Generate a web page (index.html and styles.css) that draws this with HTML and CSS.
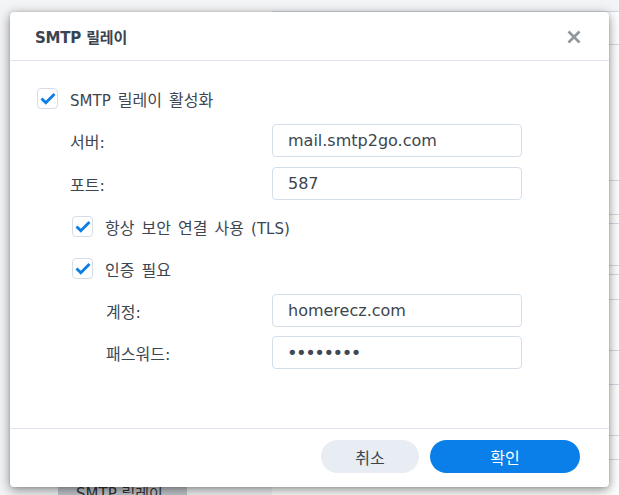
FILE: index.html
```html
<!DOCTYPE html>
<html lang="ko">
<head>
<meta charset="utf-8">
<title>SMTP 릴레이</title>
<link rel="stylesheet" href="styles.css">
</head>
<body>
<div class="page">
  <div class="bg-list">
    <div class="bg-row h44"></div>
    <div class="bg-row h136"></div>
    <div class="bg-row h34"></div>
    <div class="bg-row h9"></div>
    <div class="bg-row h42"></div>
    <div class="bg-row h9"></div>
    <div class="bg-row h25"></div>
    <div class="bg-row h51"></div>
    <div class="bg-row h34"></div>
    <div class="bg-row h51"></div>
    <div class="bg-row h24"></div>
  </div>
  <div class="bg-tab">SMTP 릴레이</div>
</div>

<div class="dialog">
  <div class="dlg-head">
    <div class="dlg-title">SMTP 릴레이</div>
    <svg class="close" width="14" height="14" viewBox="0 0 14 14"><path d="M1.5 1.5 L12.5 12.5 M12.5 1.5 L1.5 12.5" stroke="#8f969d" stroke-width="2.6" stroke-linecap="butt"/></svg>
  </div>
  <div class="dlg-body">
    <div class="row">
      <span class="cb"><svg width="16" height="13" viewBox="0 0 16 13"><path d="M1.5 6.5 L5.8 10.8 L14.5 2" fill="none" stroke="#0b7de6" stroke-width="2.8"/></svg></span>
      <span class="lbl">SMTP<span class="ko"> 릴레이 활성화</span></span>
    </div>
    <div class="row g9 field lv1">
      <span class="flabel ko">서버:</span>
      <div class="input">mail.smtp2go.com</div>
    </div>
    <div class="row g10 field lv1">
      <span class="flabel ko">포트:</span>
      <div class="input">587</div>
    </div>
    <div class="row g10 sub">
      <span class="cb"><svg width="16" height="13" viewBox="0 0 16 13"><path d="M1.5 6.5 L5.8 10.8 L14.5 2" fill="none" stroke="#0b7de6" stroke-width="2.8"/></svg></span>
      <span class="lbl"><span class="ko">항상 보안 연결 사용 </span>(TLS)</span>
    </div>
    <div class="row g9 sub">
      <span class="cb"><svg width="16" height="13" viewBox="0 0 16 13"><path d="M1.5 6.5 L5.8 10.8 L14.5 2" fill="none" stroke="#0b7de6" stroke-width="2.8"/></svg></span>
      <span class="lbl ko">인증 필요</span>
    </div>
    <div class="row g9 field lv2">
      <span class="flabel ko">계정:</span>
      <div class="input">homerecz.com</div>
    </div>
    <div class="row g9 field lv2">
      <span class="flabel ko">패스워드:</span>
      <div class="input pw">••••••••</div>
    </div>
  </div>
  <div class="dlg-foot">
    <button class="btn cancel">취소</button>
    <button class="btn ok">확인</button>
  </div>
</div>
</body>
</html>
```

FILE: styles.css
```css
* { box-sizing: border-box; }
html, body { margin: 0; padding: 0; }
body {
  width: 619px;
  height: 495px;
  overflow: hidden;
  position: relative;
  background: #f3f4f6;
  font-family: "DejaVu Sans", "Noto Sans CJK KR", sans-serif;
  color: #3d4650;
}
.page {
  width: 619px;
  height: 495px;
  position: relative;
  display: flex;
  flex-direction: column;
}
.bg-list {
  margin-left: 272px;
  background: #fff;
  border-top: 1px solid #cfd8e2;
  margin-top: 11px;
  flex: 1;
  display: flex;
  flex-direction: column;
}
.bg-row { border-bottom: 1px solid #d3dbe4; }
.h44 { height: 33px; }
.h136 { height: 136px; }
.h34 { height: 34px; }
.h9 { height: 9px; }
.h42 { height: 42px; }
.h25 { height: 25px; }
.h51 { height: 51px; }
.h24 { height: 24px; }
.bg-tab {
  position: absolute;
  left: 58px;
  top: 483px;
  width: 129px;
  height: 12px;
  overflow: hidden;
  background: #c3c8ce;
  color: #333;
  font-size: 15px;
  line-height: 18px;
  padding: 2px 0 0 18px;
}

.dialog {
  position: absolute;
  left: 10px;
  top: 12px;
  width: 599px;
  height: 475px;
  background: #fff;
  border-radius: 4px;
  box-shadow: 0 3px 12px rgba(0, 0, 0, 0.45), 0 0 3px rgba(0,0,0,0.15);
  display: flex;
  flex-direction: column;
}
.dlg-head {
  height: 49px;
  border-bottom: 1px solid #dde4ec;
  display: flex;
  align-items: center;
  justify-content: space-between;
  padding: 0 28px 0 25px;
}
.dlg-title {
  font-size: 15px;
  font-weight: bold;
  color: #3a4350;
  letter-spacing: -0.2px;
}
.close { display: block; margin-top: 1px; }

.dlg-body {
  flex: 1;
  padding: 21px 0 0 27px;
  display: flex;
  flex-direction: column;
}
.row {
  height: 33px;
  display: flex;
  align-items: center;
  font-size: 15px;
  color: #3d4650;
}
.ko { font-size: 16px; word-spacing: 2px; }
.g9 { margin-top: 9px; }
.g10 { margin-top: 10px; }
.cb {
  width: 21px;
  height: 21px;
  border: 1px solid #d4dde7;
  border-radius: 4px;
  display: flex;
  align-items: center;
  justify-content: center;
  margin-right: 12px;
  flex: none;
}
.cb svg { display: block; }
.sub { padding-left: 35px; }
.field .flabel { flex: none; }
.lv1 .flabel { margin-left: 33px; width: 202px; }
.lv2 .flabel { margin-left: 69px; width: 166px; }
.input {
  width: 250px;
  height: 33px;
  border: 1px solid #d4dee9;
  border-radius: 4px;
  padding: 0 0 0 15px;
  display: flex;
  align-items: center;
  font-size: 16px;
  color: #3d4650;
}
.input.pw { font-size: 18px; letter-spacing: -1.5px; color: #3f4853; padding-left: 14px; }

.dlg-foot {
  height: 59px;
  border-top: 1px solid #dde4ec;
  display: flex;
  justify-content: flex-end;
  align-items: flex-start;
  padding: 11px 29px 0 0;
  gap: 11px;
}
.btn {
  height: 33px;
  border: none;
  border-radius: 17px;
  font-family: "DejaVu Sans", "Noto Sans CJK KR", sans-serif;
  font-size: 16px;
  padding: 0;
}
.cancel { width: 98px; background: #e8edf3; color: #3a434d; }
.ok { width: 150px; background: #0a7ee9; color: #fff; }
```
